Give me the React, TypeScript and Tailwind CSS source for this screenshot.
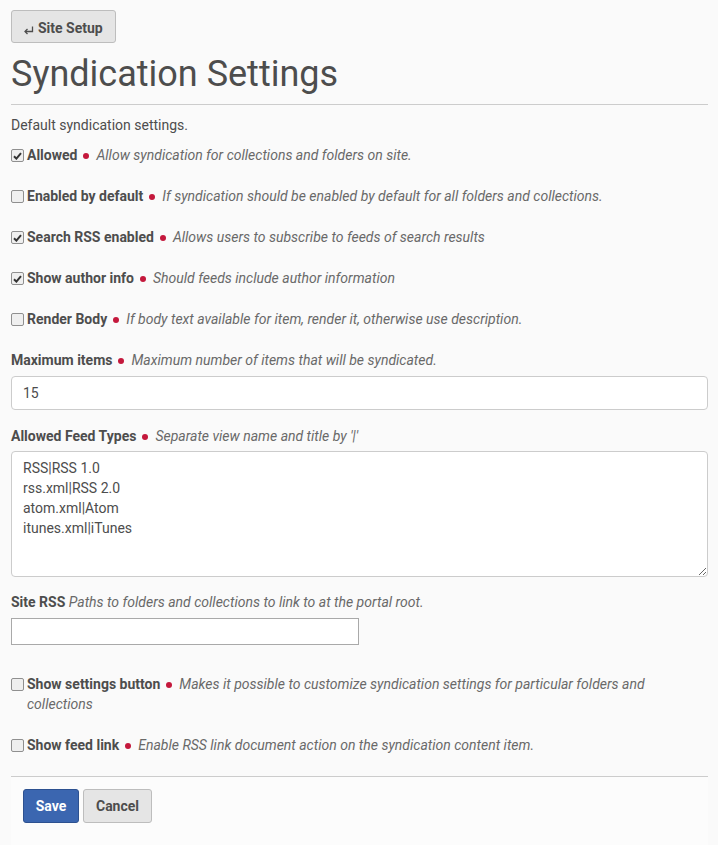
import React from 'react';

type Row = {
  label: string;
  help: string;
  checked: boolean;
  required?: boolean;
};

const topRows: Row[] = [
  { label: 'Allowed', help: 'Allow syndication for collections and folders on site.', checked: true, required: true },
  { label: 'Enabled by default', help: 'If syndication should be enabled by default for all folders and collections.', checked: false, required: true },
  { label: 'Search RSS enabled', help: 'Allows users to subscribe to feeds of search results', checked: true, required: true },
  { label: 'Show author info', help: 'Should feeds include author information', checked: true, required: true },
  { label: 'Render Body', help: 'If body text available for item, render it, otherwise use description.', checked: false, required: true },
];

function Dot() {
  return (
    <span className="inline-block w-[6px] h-[6px] rounded-full bg-[#c4183c] ml-[6px] mr-[7px] align-middle" />
  );
}

function Check({ on }: { on: boolean }) {
  return (
    <span className="mt-[4px] shrink-0 w-[13px] h-[13px] rounded-[2px] border border-[#8f8f8f] bg-[#efefef] flex items-center justify-center">
      {on && (
        <svg width="9" height="8" viewBox="0 0 9 8">
          <path d="M1 4.2 L3.4 6.6 L8 1.2" fill="none" stroke="#333" strokeWidth="2" />
        </svg>
      )}
    </span>
  );
}

function CheckRow({ row }: { row: Row }) {
  return (
    <div className="flex gap-[3px] mb-[21px] leading-[20px]">
      <Check on={row.checked} />
      <div>
        <span className="font-bold">{row.label}</span>
        {row.required && <Dot />}
        <span className="italic text-[#696969]">{row.help}</span>
      </div>
    </div>
  );
}

export default function App() {
  return (
    <div className="min-h-screen bg-[#fafafa] text-[#4d4d4d] text-[14px] leading-[20px] pl-[11px] pr-[10px] pt-[10px]" style={{ fontFamily: 'Roboto, "Liberation Sans", sans-serif' }}>
      <button className="h-[33px] px-[12px] pt-[2px] bg-[#e5e5e5] border border-[#bdbdbd] rounded-[3px] font-bold text-[14px] text-[#4d4d4d] flex items-center gap-[4px]">
        <svg width="10" height="9" viewBox="0 0 10 9" className="mt-[5px]">
          <path d="M8.5 0.5 V5.5 H1.5" fill="none" stroke="#4d4d4d" strokeWidth="1.3" />
          <path d="M3.5 3 L1 5.5 L3.5 8" fill="none" stroke="#4d4d4d" strokeWidth="1.3" />
        </svg>
        Site Setup
      </button>

      <h1 className="text-[36px] leading-[40px] mt-[11px] text-[#4d4d4d]">Syndication Settings</h1>
      <div className="border-t border-[#cccccc] mt-[10px]" />

      <p className="leading-[20px] mt-[10px] mb-[10px]">Default syndication settings.</p>

      {topRows.map((r) => (
        <CheckRow key={r.label} row={r} />
      ))}

      <div className="leading-[20px] mb-[6px]">
        <span className="font-bold">Maximum items</span>
        <Dot />
        <span className="italic text-[#696969]">Maximum number of items that will be syndicated.</span>
      </div>
      <div className="h-[34px] bg-white border border-[#cccccc] rounded-[4px] px-[11px] flex items-center mb-[16px]">15</div>

      <div className="leading-[20px] mb-[5px]">
        <span className="font-bold">Allowed Feed Types</span>
        <Dot />
        <span className="italic text-[#696969]">Separate view name and title by '|'</span>
      </div>
      <textarea
        className="block w-full h-[126px] bg-white border border-[#cccccc] rounded-[4px] px-[11px] py-[6px] leading-[20px] text-[14px] text-[#4d4d4d] mb-[15px] outline-none"
        defaultValue={'RSS|RSS 1.0\nrss.xml|RSS 2.0\natom.xml|Atom\nitunes.xml|iTunes'}
      />

      <div className="leading-[20px] mb-[6px]">
        <span className="font-bold">Site RSS</span>{' '}
        <span className="italic text-[#696969]">Paths to folders and collections to link to at the portal root.</span>
      </div>
      <div className="w-[348px] h-[27px] bg-white border border-[#a9a9a9] mb-[29px]" />

      <CheckRow
        row={{
          label: 'Show settings button',
          help: 'Makes it possible to customize syndication settings for particular folders and collections',
          checked: false,
          required: true,
        }}
      />
      <CheckRow
        row={{
          label: 'Show feed link',
          help: 'Enable RSS link document action on the syndication content item.',
          checked: false,
          required: true,
        }}
      />

      <div className="border-t border-[#cccccc] bg-[#fcfcfc] px-[12px] pt-[12px] pb-[22px] flex gap-[4px]">
        <button className="h-[34px] w-[56px] bg-[#3b66b0] border border-[#2d5190] rounded-[3px] text-white font-bold">Save</button>
        <button className="h-[34px] w-[69px] bg-[#e5e5e5] border border-[#bdbdbd] rounded-[3px] text-[#4d4d4d] font-bold">Cancel</button>
      </div>
    </div>
  );
}
